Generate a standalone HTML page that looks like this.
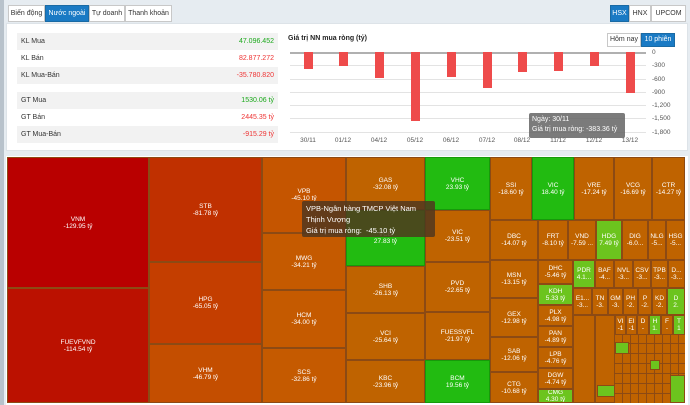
<!DOCTYPE html>
<html><head><meta charset="utf-8"><style>
*{margin:0;padding:0;box-sizing:border-box}
body{width:690px;height:405px;background:#e6ecf1;font-family:"Liberation Sans",sans-serif;position:relative;overflow:hidden}
.a{position:absolute}
.tab{position:absolute;top:5px;height:17px;border:1px solid #c8c8c8;background:#fff;font-size:7px;line-height:15px;color:#333;text-align:center;white-space:nowrap;overflow:hidden}
.on{background:#1a7ac4;color:#fff;border-color:#1a6aa4}
.row{position:absolute;left:17px;width:261px;height:17px;font-size:7px;line-height:17px;color:#333;padding:0 4px}
.row b{position:absolute;right:4px;font-weight:normal}
.g{color:#1aa81a}.r{color:#e33}
.gl{position:absolute;left:290px;width:356px;height:1px;background:#e3e3e3}
.yl{position:absolute;left:652px;font-size:6.5px;color:#555}
.xl{position:absolute;top:137px;font-size:6.5px;color:#555;width:30px;text-align:center}
.bar{position:absolute;top:52px;width:9px;background:#ee4b4b}
.t{position:absolute;border:1px solid #8c4a14;color:#fff;font-size:6.5px;text-align:center;display:flex;align-items:center;justify-content:center;line-height:7px;overflow:hidden;background:#bf6300}
.gr{background:#22bb11;border-color:#169a0a}
.lg{background:#6cc41e}
</style></head><body>
<div class="a" style="left:0;top:0;width:4px;height:405px;background:#b8c2cb"></div>
<div class="tab" style="left:8px;width:37px">Biến động</div>
<div class="tab on" style="left:45px;width:44px">Nước ngoài</div>
<div class="tab" style="left:89px;width:36px">Tự doanh</div>
<div class="tab" style="left:125px;width:47px">Thanh khoản</div>
<div class="tab on" style="left:610px;width:19px">HSX</div>
<div class="tab" style="left:629px;width:22px">HNX</div>
<div class="tab" style="left:651px;width:35px">UPCOM</div>
<div class="a" style="left:6px;top:23px;width:682px;height:128px;background:#fff;border:1px solid #dde3e8"></div>
<div class="a" style="left:17px;top:33px;width:261px;height:1px;background:#ddd"></div>
<div class="row" style="top:33px;background:#f2f2f2">KL Mua<b class="g">47.096.452</b></div>
<div class="row" style="top:50px">KL Bán<b class="r">82.877.272</b></div>
<div class="row" style="top:67px;background:#f2f2f2">KL Mua-Bán<b class="r">-35.780.820</b></div>
<div class="row" style="top:92px;background:#f2f2f2">GT Mua<b class="g">1530.06 tỷ</b></div>
<div class="row" style="top:109px">GT Bán<b class="r">2445.35 tỷ</b></div>
<div class="row" style="top:126px;background:#f2f2f2">GT Mua-Bán<b class="r">-915.29 tỷ</b></div>
<div class="a" style="left:288px;top:35px;font-size:7px;font-weight:bold;color:#222">Giá trị NN mua ròng (tỷ)</div>
<div class="tab" style="left:607px;top:33px;height:14px;line-height:12px;width:34px">Hôm nay</div>
<div class="tab on" style="left:641px;top:33px;height:14px;line-height:12px;width:34px">10 phiên</div>
<div class="gl" style="top:65px"></div><div class="gl" style="top:79px"></div><div class="gl" style="top:92px"></div><div class="gl" style="top:105px"></div><div class="gl" style="top:118px"></div><div class="gl" style="top:132px"></div>
<div class="a" style="left:290px;top:52px;width:356px;height:2px;background:#b0b0b0"></div>
<div class="yl" style="top:49px">0</div><div class="yl" style="top:62px">-300</div><div class="yl" style="top:76px">-600</div><div class="yl" style="top:89px">-900</div><div class="yl" style="top:102px">-1,200</div><div class="yl" style="top:115px">-1,500</div><div class="yl" style="top:129px">-1,800</div>
<div class="bar" style="left:304px;height:17px"></div>
<div class="bar" style="left:339px;height:14px"></div>
<div class="bar" style="left:375px;height:26px"></div>
<div class="bar" style="left:411px;height:69px"></div>
<div class="bar" style="left:447px;height:25px"></div>
<div class="bar" style="left:483px;height:36px"></div>
<div class="bar" style="left:518px;height:20px"></div>
<div class="bar" style="left:554px;height:19px"></div>
<div class="bar" style="left:590px;height:14px"></div>
<div class="bar" style="left:626px;height:41px"></div>
<div class="xl" style="left:293px">30/11</div><div class="xl" style="left:328px">01/12</div><div class="xl" style="left:364px">04/12</div><div class="xl" style="left:400px">05/12</div><div class="xl" style="left:436px">06/12</div><div class="xl" style="left:472px">07/12</div><div class="xl" style="left:507px">08/12</div><div class="xl" style="left:543px">11/12</div><div class="xl" style="left:579px">12/12</div><div class="xl" style="left:615px">13/12</div>
<div class="a" style="left:529px;top:113px;width:96px;height:25px;background:rgba(100,100,100,.85);border-radius:2px;color:#fff;font-size:7px;line-height:10px;padding:2px 3px">Ngày: 30/11<br>Giá trị mua ròng: -383.36 tỷ</div>
<div class="a" style="left:6px;top:156px;width:682px;height:249px;background:#fff"></div>
<div class="t" style="left:7px;top:157px;width:142px;height:131px;background:#b90000">VNM<br>-129.95 tỷ</div>
<div class="t" style="left:7px;top:288px;width:142px;height:115px;background:#bb1100">FUEVFVND<br>-114.54 tỷ</div>
<div class="t" style="left:149px;top:157px;width:113px;height:105px;background:#c03000">STB<br>-81.78 tỷ</div>
<div class="t" style="left:149px;top:262px;width:113px;height:82px;background:#c43e00">HPG<br>-65.05 tỷ</div>
<div class="t" style="left:149px;top:344px;width:113px;height:59px;background:#c44e00">VHM<br>-46.79 tỷ</div>
<div class="t" style="left:262px;top:157px;width:84px;height:76px;background:#c55500">VPB<br>-45.10 tỷ</div>
<div class="t" style="left:262px;top:233px;width:84px;height:57px;background:#c55a00">MWG<br>-34.21 tỷ</div>
<div class="t" style="left:262px;top:290px;width:84px;height:58px;background:#c55a00">HCM<br>-34.00 tỷ</div>
<div class="t" style="left:262px;top:348px;width:84px;height:55px;background:#c55a00">SCS<br>-32.86 tỷ</div>
<div class="t" style="left:346px;top:157px;width:79px;height:53px">GAS<br>-32.08 tỷ</div>
<div class="t gr" style="left:346px;top:210px;width:79px;height:56px">VCB<br>27.83 tỷ</div>
<div class="t" style="left:346px;top:266px;width:79px;height:47px">SHB<br>-26.13 tỷ</div>
<div class="t" style="left:346px;top:313px;width:79px;height:47px">VCI<br>-25.64 tỷ</div>
<div class="t" style="left:346px;top:360px;width:79px;height:43px">KBC<br>-23.96 tỷ</div>
<div class="t gr" style="left:425px;top:157px;width:65px;height:53px">VHC<br>23.93 tỷ</div>
<div class="t" style="left:425px;top:210px;width:65px;height:52px">VIC<br>-23.51 tỷ</div>
<div class="t" style="left:425px;top:262px;width:65px;height:50px">PVD<br>-22.65 tỷ</div>
<div class="t" style="left:425px;top:312px;width:65px;height:48px">FUESSVFL<br>-21.97 tỷ</div>
<div class="t gr" style="left:425px;top:360px;width:65px;height:43px">BCM<br>19.56 tỷ</div>
<div class="t" style="left:490px;top:157px;width:42px;height:63px">SSI<br>-18.60 tỷ</div>
<div class="t gr" style="left:532px;top:157px;width:42px;height:63px">VIC<br>18.40 tỷ</div>
<div class="t" style="left:574px;top:157px;width:40px;height:63px">VRE<br>-17.24 tỷ</div>
<div class="t" style="left:614px;top:157px;width:38px;height:63px">VCG<br>-16.69 tỷ</div>
<div class="t" style="left:652px;top:157px;width:33px;height:63px">CTR<br>-14.27 tỷ</div>
<div class="t" style="left:490px;top:220px;width:48px;height:40px">DBC<br>-14.07 tỷ</div>
<div class="t" style="left:490px;top:260px;width:48px;height:38px">MSN<br>-13.15 tỷ</div>
<div class="t" style="left:490px;top:298px;width:48px;height:39px">GEX<br>-12.98 tỷ</div>
<div class="t" style="left:490px;top:337px;width:48px;height:35px">SAB<br>-12.06 tỷ</div>
<div class="t" style="left:490px;top:372px;width:48px;height:31px">CTG<br>-10.68 tỷ</div>
<div class="t" style="left:538px;top:220px;width:30px;height:40px">FRT<br>-8.10 tỷ</div>
<div class="t" style="left:568px;top:220px;width:28px;height:40px">VND<br>-7.59 ...</div>
<div class="t lg" style="left:596px;top:220px;width:26px;height:40px">HDG<br>7.49 tỷ</div>
<div class="t" style="left:622px;top:220px;width:26px;height:40px">DIG<br>-6.0...</div>
<div class="t" style="left:648px;top:220px;width:18px;height:40px">NLG<br>-5...</div>
<div class="t" style="left:666px;top:220px;width:19px;height:40px">HSG<br>-5...</div>
<div class="t" style="left:538px;top:260px;width:35px;height:24px">DHC<br>-5.46 tỷ</div>
<div class="t lg" style="left:538px;top:284px;width:35px;height:21px">KDH<br>5.33 tỷ</div>
<div class="t" style="left:538px;top:305px;width:35px;height:21px">PLX<br>-4.98 tỷ</div>
<div class="t" style="left:538px;top:326px;width:35px;height:21px">PAN<br>-4.89 tỷ</div>
<div class="t" style="left:538px;top:347px;width:35px;height:21px">LPB<br>-4.76 tỷ</div>
<div class="t" style="left:538px;top:368px;width:35px;height:21px">DGW<br>-4.74 tỷ</div>
<div class="t lg" style="left:538px;top:389px;width:35px;height:14px">CMG<br>4.30 tỷ</div>
<div class="t lg" style="left:573px;top:260px;width:22px;height:28px">PDR<br>4.1...</div>
<div class="t" style="left:595px;top:260px;width:19px;height:28px">BAF<br>-4...</div>
<div class="t" style="left:614px;top:260px;width:19px;height:28px">NVL<br>-3...</div>
<div class="t" style="left:633px;top:260px;width:18px;height:28px">CSV<br>-3...</div>
<div class="t" style="left:651px;top:260px;width:17px;height:28px">TPB<br>-3...</div>
<div class="t" style="left:668px;top:260px;width:17px;height:28px">D...<br>-3...</div>
<div class="t" style="left:573px;top:288px;width:19px;height:27px">E1...<br>-3...</div>
<div class="t" style="left:592px;top:288px;width:16px;height:27px">TN<br>-3.</div>
<div class="t" style="left:608px;top:288px;width:15px;height:27px">GM<br>-3.</div>
<div class="t" style="left:623px;top:288px;width:15px;height:27px">PH<br>-2.</div>
<div class="t" style="left:638px;top:288px;width:14px;height:27px">P<br>-2.</div>
<div class="t" style="left:652px;top:288px;width:15px;height:27px">KD<br>-2.</div>
<div class="t lg" style="left:667px;top:288px;width:18px;height:27px">D<br>2.</div>
<div class="t" style="left:573px;top:315px;width:22px;height:88px"></div>
<div class="t" style="left:595px;top:315px;width:20px;height:88px"></div>
<div class="t" style="left:615px;top:315px;width:11px;height:20px">VI<br>-1</div>
<div class="t" style="left:626px;top:315px;width:11px;height:20px">EI<br>-1</div>
<div class="t" style="left:637px;top:315px;width:12px;height:20px">D<br>-</div>
<div class="t lg" style="left:649px;top:315px;width:12px;height:20px">H<br>1.</div>
<div class="t" style="left:661px;top:315px;width:12px;height:20px">F<br>-</div>
<div class="t lg" style="left:673px;top:315px;width:12px;height:20px">T<br>1</div>
<div class="a" style="left:615px;top:335px;width:70px;height:68px;background:repeating-linear-gradient(90deg,#bf6300 0 7px,#8c4a14 7px 8px),#bf6300"></div>
<div class="a" style="left:615px;top:335px;width:70px;height:68px;background:repeating-linear-gradient(0deg,transparent 0 9px,#8c4a14 9px 10px)"></div>
<div class="t lg" style="left:615px;top:342px;width:14px;height:12px"></div>
<div class="t lg" style="left:650px;top:360px;width:10px;height:10px"></div>
<div class="t lg" style="left:670px;top:375px;width:15px;height:28px"></div>
<div class="t lg" style="left:597px;top:385px;width:18px;height:12px"></div>
<div class="a" style="left:302px;top:201px;width:133px;height:36px;background:rgba(80,55,30,.85);border-radius:2px;color:#fff;font-size:7.5px;line-height:11px;padding:2px 4px">VPB-Ngân hàng TMCP Việt Nam<br>Thịnh Vượng<br>Giá trị mua ròng: &nbsp;-45.10 tỷ</div>
</body></html>
